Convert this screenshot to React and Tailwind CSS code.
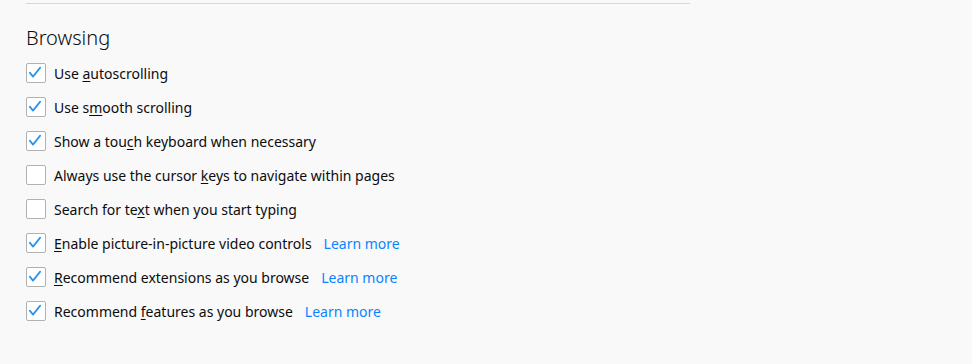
import React from "react";

function Check({ checked }) {
  return (
    <div className="w-5 h-5 shrink-0 rounded-[2px] border border-[#b1b1b3] bg-white">
      {checked && (
        <svg width="18" height="18" viewBox="0 0 18 18" fill="none" className="block">
          <path d="M2.8 8.6 L6 12.6 L13.2 3.6" stroke="#2c90ee" strokeWidth="1.7" strokeLinecap="round" strokeLinejoin="round" />
        </svg>
      )}
    </div>
  );
}

const rows = [
  { c: true, pre: "Use ", k: "a", post: "utoscrolling" },
  { c: true, pre: "Use s", k: "m", post: "ooth scrolling" },
  { c: true, pre: "Show a tou", k: "c", post: "h keyboard when necessary" },
  { c: false, pre: "Always use the cursor ", k: "k", post: "eys to navigate within pages" },
  { c: false, pre: "Search for te", k: "x", post: "t when you start typing" },
  { c: true, pre: "", k: "E", post: "nable picture-in-picture video controls", learn: true },
  { c: true, pre: "", k: "R", post: "ecommend extensions as you browse", learn: true },
  { c: true, pre: "Recommend ", k: "f", post: "eatures as you browse", learn: true },
];

export default function App() {
  return (
    <div className="w-[972px] h-[364px] bg-[#f9f9fa] text-[#0c0c0d] pl-[26px] pt-[3px] overflow-hidden" style={{ fontFamily: '"Noto Sans", sans-serif' }}>
      <div className="w-[664px] h-px bg-[#d7d7db]" />
      <h1 className="text-[20px] font-light leading-[30px] mt-[19px] mb-[3px]">Browsing</h1>
      <div className="flex flex-col">
        {rows.map((r, i) => (
          <div key={i} className="h-[34px] flex items-center">
            <Check checked={r.c} />
            <span className="ml-[8px] text-[14px] leading-5 pt-[2px]">
              {r.pre}
              <span className="underline underline-offset-2">{r.k}</span>
              {r.post}
            </span>
            {r.learn && <span className="ml-[12px] text-[14px] leading-5 pt-[2px] text-[#0a84ff]">Learn more</span>}
          </div>
        ))}
      </div>
    </div>
  );
}
